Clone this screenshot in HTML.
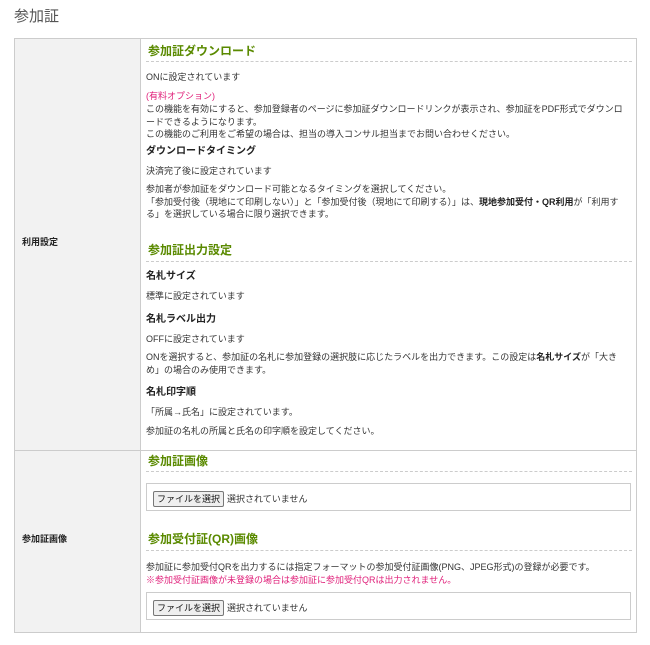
<!DOCTYPE html>
<html><head><meta charset="utf-8"><style>
*{margin:0;padding:0;box-sizing:border-box}
body{width:650px;height:645px;background:#fff;position:relative;font-family:"Liberation Sans","Noto Sans CJK JP",sans-serif;color:#333;overflow:hidden}
.a{position:absolute;white-space:nowrap;font-size:9px;line-height:12.5px}
.h{position:absolute;font-size:12px;font-weight:bold;color:#5a8a00;white-space:nowrap;line-height:14px}
.d{position:absolute;left:146px;width:486px;border-top:1px dashed #ccc}
.b{font-weight:bold;color:#222}
.lb{font-size:10px;font-weight:bold;color:#222}
.pink{color:#e0207a}
.box{position:absolute;left:146px;width:485px;height:28px;border:1px solid #ccc;background:#fff}
.btn{position:absolute;left:6px;top:7px;height:16px;padding:0 3px;border:1px solid #777;background:#efefef;border-radius:2px;font-size:9px;line-height:14px;color:#111}
.ns{position:absolute;left:80px;top:8px;font-size:9px;line-height:14px;color:#333}
</style></head><body>
<div class="a" style="left:14px;top:8px;font-size:15px;line-height:18px;color:#555">参加証</div>
<div style="position:absolute;left:14px;top:38px;width:623px;height:595px;border:1px solid #ccc;background:#f2f2f2"></div>
<div style="position:absolute;left:140px;top:39px;width:496px;height:593px;background:#fff;border-left:1px solid #ccc"></div>
<div style="position:absolute;left:15px;top:450px;width:621px;border-top:1px solid #ccc"></div>
<div class="a b" style="left:22px;top:236px">利用設定</div>
<div class="a b" style="left:22px;top:533px">参加証画像</div>

<div class="h" style="left:148px;top:44px">参加証ダウンロード</div>
<div class="d" style="top:61px"></div>
<div class="a" style="left:146px;top:71px">ONに設定されています</div>
<div class="a pink" style="left:146px;top:90px">(有料オプション)</div>
<div class="a" style="left:146px;top:103px">この機能を有効にすると、参加登録者のページに参加証ダウンロードリンクが表示され、参加証をPDF形式でダウンロ<br>ードできるようになります。<br>この機能のご利用をご希望の場合は、担当の導入コンサル担当までお問い合わせください。</div>
<div class="a lb" style="left:146px;top:146px">ダウンロードタイミング</div>
<div class="a" style="left:146px;top:165px">決済完了後に設定されています</div>
<div class="a" style="left:146px;top:183px">参加者が参加証をダウンロード可能となるタイミングを選択してください。<br>「参加受付後（現地にて印刷しない）」と「参加受付後（現地にて印刷する）」は、<b class="b">現地参加受付・QR利用</b>が「利用す<br>る」を選択している場合に限り選択できます。</div>

<div class="h" style="left:148px;top:243px">参加証出力設定</div>
<div class="d" style="top:261px"></div>
<div class="a lb" style="left:146px;top:271px">名札サイズ</div>
<div class="a" style="left:146px;top:290px">標準に設定されています</div>
<div class="a lb" style="left:146px;top:314px">名札ラベル出力</div>
<div class="a" style="left:146px;top:333px">OFFに設定されています</div>
<div class="a" style="left:146px;top:351px">ONを選択すると、参加証の名札に参加登録の選択肢に応じたラベルを出力できます。この設定は<b class="b">名札サイズ</b>が「大き<br>め」の場合のみ使用できます。</div>
<div class="a lb" style="left:146px;top:387px">名札印字順</div>
<div class="a" style="left:146px;top:406px">「所属→氏名」に設定されています。</div>
<div class="a" style="left:146px;top:425px">参加証の名札の所属と氏名の印字順を設定してください。</div>

<div class="h" style="left:148px;top:454px">参加証画像</div>
<div class="d" style="top:471px"></div>
<div class="box" style="top:483px"><div class="btn">ファイルを選択</div><div class="ns">選択されていません</div></div>

<div class="h" style="left:148px;top:532px">参加受付証(QR)画像</div>
<div class="d" style="top:550px"></div>
<div class="a" style="left:146px;top:561px">参加証に参加受付QRを出力するには指定フォーマットの参加受付証画像(PNG、JPEG形式)の登録が必要です。</div>
<div class="a pink" style="left:146px;top:574px">※参加受付証画像が未登録の場合は参加証に参加受付QRは出力されません。</div>
<div class="box" style="top:592px"><div class="btn">ファイルを選択</div><div class="ns">選択されていません</div></div>
</body></html>
